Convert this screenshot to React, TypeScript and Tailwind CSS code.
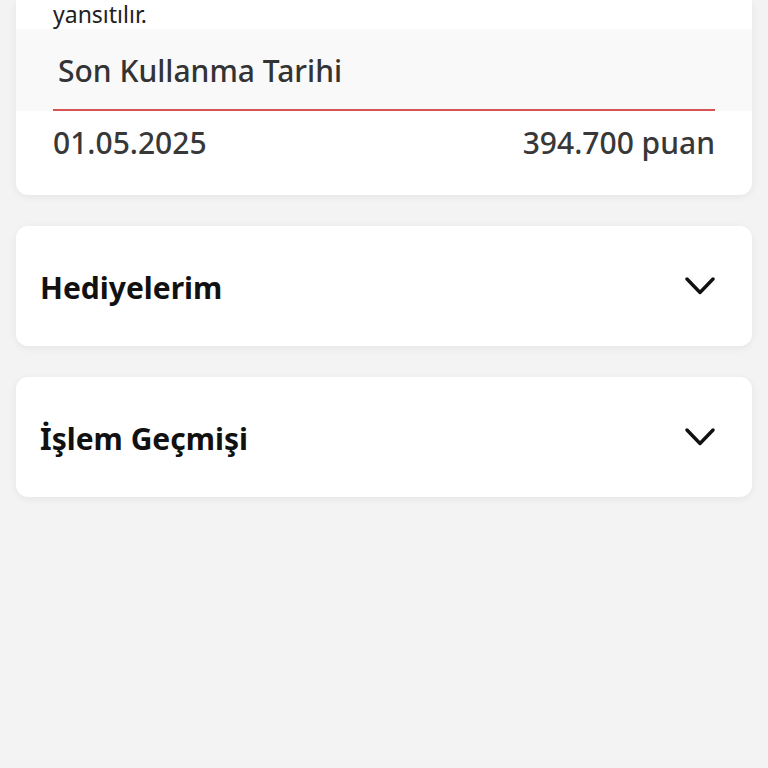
import React from "react";

function Chevron() {
  return (
    <svg width="30" height="18" viewBox="0 0 30 18" fill="none" className="-mt-[2px]">
      <path d="M2 2 L15 15.5 L28 2" stroke="#111" strokeWidth="3.4" strokeLinecap="round" strokeLinejoin="round" />
    </svg>
  );
}

function Accordion({ title }: { title: string }) {
  return (
    <div className="bg-white rounded-xl shadow-[0_2px_8px_rgba(0,0,0,0.06)] h-[120px] flex items-center justify-between pl-[24px] pr-[37px] pt-[2px]">
      <span className="text-[30px] font-bold text-[#111]">{title}</span>
      <Chevron />
    </div>
  );
}

export default function App() {
  return (
    <div className="min-h-screen bg-[#f3f3f3] px-4 flex flex-col gap-[31px]" style={{ fontFamily: '"Noto Sans", "Open Sans", sans-serif' }}>
      <div className="bg-white rounded-b-xl shadow-[0_2px_8px_rgba(0,0,0,0.06)] pb-[32px]">
        <div className="px-[37px] text-[23px] leading-[29px] text-[#222]">yansıtılır.</div>
        <div className="bg-[#f9f9f9] h-[82px] flex flex-col">
          <div className="mx-[37px] flex-1 flex items-center pt-[3px] px-[5px] text-[30px] font-medium text-[#333]">Son Kullanma Tarihi</div>
          <div className="mx-[37px] h-[2px] bg-[#d65456]" />
        </div>
        <div className="px-[37px] pt-[12px] flex justify-between text-[30px] font-medium text-[#383838] leading-[40px]">
          <span>01.05.2025</span>
          <span>394.700 puan</span>
        </div>
      </div>
      <Accordion title="Hediyelerim" />
      <Accordion title="İşlem Geçmişi" />
    </div>
  );
}
